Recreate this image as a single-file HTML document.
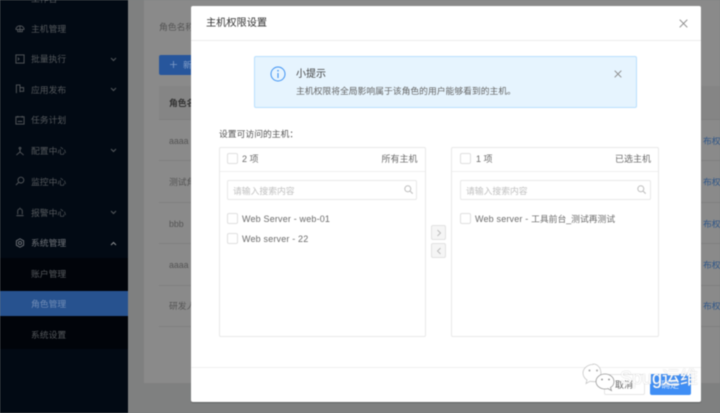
<!DOCTYPE html>
<html lang="zh">
<head>
<meta charset="utf-8">
<style>
html,body{margin:0;padding:0;width:720px;height:413px;overflow:hidden;background:#7f8080}
*{box-sizing:border-box}
#root{position:relative;width:720px;height:413px;overflow:hidden;background:#7f8080;font-family:"Liberation Sans","Noto Sans CJK SC",sans-serif;filter:blur(.5px)}
.a{position:absolute;white-space:nowrap;line-height:1}
.side{position:absolute;left:0;top:0;width:127.500px;height:413px;background:#020a14}
.sub{position:absolute;left:0;top:258px;width:127.500px;height:91px;background:#01040a}
.sel{position:absolute;left:0;top:291px;width:127.500px;height:25px;background:#27528f}
.m{position:absolute;left:31px;font-size:8.800px;line-height:12px;color:#54585c;white-space:nowrap}
.ic{position:absolute;left:15px;width:10px;height:10px;fill:none;stroke:#54585c;stroke-width:1}
.ch{position:absolute;left:110px;width:7px;height:5px;fill:none;stroke:#54585c;stroke-width:1}
.card{position:absolute;left:144px;top:0;width:576px;height:383px;background:#8a8a8a}
.t{position:absolute;font-size:8.800px;line-height:12px;color:#555;white-space:nowrap}
.ln{position:absolute;left:159px;width:561px;height:1px;background:#7f7f7f}
.blue{position:absolute;left:703px;font-size:8.800px;line-height:12px;color:#2f5688;white-space:nowrap}
.modal{position:absolute;left:190.500px;top:5.500px;width:510.500px;height:396px;background:#fff;border-radius:2px;box-shadow:0 1px 1px rgba(0,0,0,.25)}
.list{position:absolute;top:147px;height:190px;background:#fff;border:1px solid #e8e8e8;border-radius:2px}
.cb{position:absolute;width:11px;height:11px;border:1px solid #e0e0e0;border-radius:2px;background:#fff}
.lt{position:absolute;font-size:9px;line-height:12px;color:#6a6a6a;white-space:nowrap}
.inp{position:absolute;height:20px;border:1px solid #e8e8e8;border-radius:2px;background:#fff}
.ph{position:absolute;font-size:8.800px;line-height:12px;color:#c0c0c0;white-space:nowrap}
.arrow{position:absolute;left:431px;width:15px;height:15px;background:#f5f5f5;border:1px solid #e2e2e2;border-radius:2px}
</style>
</head>
<body>
<div id="root">
  <div class="side"></div>
  <div class="sub"></div>
  <div class="sel"></div>

  <div class="m" style="top:-7px">工作台</div>
  <div class="m" style="top:23px">主机管理</div>
  <div class="m" style="top:53px">批量执行</div>
  <div class="m" style="top:84px">应用发布</div>
  <div class="m" style="top:114px">任务计划</div>
  <div class="m" style="top:145px">配置中心</div>
  <div class="m" style="top:176px">监控中心</div>
  <div class="m" style="top:207px">报警中心</div>
  <div class="m" style="top:237px;color:#70747a">系统管理</div>
  <div class="m" style="top:268px">账户管理</div>
  <div class="m" style="top:298px;color:#6f8bb5">角色管理</div>
  <div class="m" style="top:329px">系统设置</div>

  <svg class="ic" style="top:24px" viewBox="0 0 11 11"><path d="M1 6a4.500 4 0 0 1 9 0H1zM3 6v2.500h5V6M5.500 2v6"/></svg>
  <svg class="ic" style="top:54px" viewBox="0 0 11 11"><rect x="1" y="1" width="9" height="9"/><path d="M3 4l1.500 1.500L3 7"/></svg>
  <svg class="ic" style="top:84px" viewBox="0 0 11 11"><path d="M1.500 10V1h4v8M5.500 4h4v4h-4"/></svg>
  <svg class="ic" style="top:115px" viewBox="0 0 11 11"><rect x="1" y="2" width="9" height="8"/><path d="M3 1v2M8 1v2M3 7h5"/></svg>
  <svg class="ic" style="top:146px" viewBox="0 0 11 11"><circle cx="5.500" cy="2.500" r="1"/><path d="M5.500 3.500V6.500L1.500 10M5.500 6.500l4 3.500"/></svg>
  <svg class="ic" style="top:176px" viewBox="0 0 11 11"><circle cx="6.500" cy="4.500" r="3.200"/><path d="M4 7l-3 3"/></svg>
  <svg class="ic" style="top:207px" viewBox="0 0 11 11"><path d="M3 8V4.500a2.500 2.500 0 0 1 5 0V8M1.500 9.500h8M5.500 .5v.8"/></svg>
  <svg class="ic" style="top:238px;stroke:#70747a" viewBox="0 0 11 11"><path d="M5.500 .8l4 2.300v4.800l-4 2.300-4-2.300V3.100z"/><circle cx="5.500" cy="5.500" r="1.700"/></svg>

  <svg class="ch" style="top:57px" viewBox="0 0 7 5"><path d="M1 1l2.500 2.500L6 1"/></svg>
  <svg class="ch" style="top:87px" viewBox="0 0 7 5"><path d="M1 1l2.500 2.500L6 1"/></svg>
  <svg class="ch" style="top:148px" viewBox="0 0 7 5"><path d="M1 1l2.500 2.500L6 1"/></svg>
  <svg class="ch" style="top:210px" viewBox="0 0 7 5"><path d="M1 1l2.500 2.500L6 1"/></svg>
  <svg class="ch" style="top:241px;stroke:#8a8d90" viewBox="0 0 7 5"><path d="M1 4l2.500-2.500L6 4"/></svg>

  <div class="card"></div>
  <div class="t" style="left:159px;top:21px">角色名称</div>
  <div class="a" style="left:159px;top:55px;width:60px;height:20px;background:#27569c;border-radius:2px"></div>
  <svg class="a" style="left:170px;top:61px;width:7px;height:7px" viewBox="0 0 7 7"><path d="M3.500 0v7M0 3.500h7" stroke="#7f9cc7" stroke-width=".8"/></svg>
  <div class="t" style="left:183px;top:59px;color:#7f9cc7">新建</div>
  <div class="a" style="left:159px;top:86px;width:561px;height:34px;background:#858585"></div>
  <div class="t" style="left:169px;top:97px;color:#333;font-weight:bold">角色名称</div>
  <div class="ln" style="top:119px"></div>
  <div class="ln" style="top:160px"></div>
  <div class="ln" style="top:202px"></div>
  <div class="ln" style="top:243px"></div>
  <div class="ln" style="top:285px"></div>
  <div class="ln" style="top:326px"></div>
  <div class="t" style="left:169px;top:135px">aaaa</div>
  <div class="t" style="left:169px;top:176px">测试角色</div>
  <div class="t" style="left:169px;top:218px">bbb</div>
  <div class="t" style="left:169px;top:259px">aaaa</div>
  <div class="t" style="left:169px;top:300px">研发人员</div>
  <div class="blue" style="top:135px">布权</div>
  <div class="blue" style="top:176px">布权</div>
  <div class="blue" style="top:218px">布权</div>
  <div class="blue" style="top:259px">布权</div>
  <div class="blue" style="top:300px">布权</div>

  <div class="modal"></div>
  <div class="a" style="left:191px;top:40px;width:510px;height:1px;background:#ececec"></div>
  <div class="a" style="left:206px;top:17px;font-size:10.200px;line-height:13px;color:#333">主机权限设置</div>
  <svg class="a" style="left:679px;top:19px;width:9px;height:9px" viewBox="0 0 9 9"><path d="M.7 .7l7.600 7.600M8.300 .7L.7 8.300" stroke="#8c8c8c" stroke-width="1" fill="none"/></svg>

  <div class="a" style="left:254px;top:56px;width:383px;height:52px;background:#e6f4fe;border:1px solid #b9e0fd;border-radius:2px"></div>
  <svg class="a" style="left:270px;top:66px;width:16px;height:16px" viewBox="0 0 16 16"><circle cx="8" cy="8" r="7" fill="none" stroke="#3f93f3" stroke-width="1"/><path d="M8 7v5" stroke="#3f93f3" stroke-width="1.100"/><circle cx="8" cy="4.700" r=".8" fill="#3f93f3"/></svg>
  <div class="a" style="left:296px;top:68px;font-size:10px;line-height:13px;color:#444">小提示</div>
  <div class="a" style="left:296px;top:85px;font-size:8.800px;line-height:12px;color:#666">主机权限将全局影响属于该角色的用户能够看到的主机。</div>
  <svg class="a" style="left:614px;top:70px;width:8px;height:8px" viewBox="0 0 8 8"><path d="M.7 .7l6.600 6.600M7.300 .7L.7 7.300" stroke="#8c8c8c" stroke-width="1" fill="none"/></svg>

  <div class="a" style="left:219px;top:128px;font-size:8.800px;line-height:12px;color:#555">设置可访问的主机：</div>

  <div class="list" style="left:219px;width:207px"></div>
  <div class="a" style="left:220px;top:171px;width:205px;height:1px;background:#f0f0f0"></div>
  <div class="cb" style="left:227px;top:153px"></div>
  <div class="lt" style="left:242px;top:153px">2 项</div>
  <div class="lt" style="left:381.500px;top:153px">所有主机</div>
  <div class="inp" style="left:227px;top:180px;width:190px"></div>
  <div class="ph" style="left:233px;top:185px">请输入搜索内容</div>
  <svg class="a" style="left:404px;top:185px;width:9px;height:9px" viewBox="0 0 9 9"><circle cx="3.800" cy="3.800" r="3" fill="none" stroke="#bdbdbd"/><path d="M6 6l2.700 2.700" stroke="#bdbdbd"/></svg>
  <div class="cb" style="left:227px;top:213px"></div>
  <div class="lt" style="left:242px;top:213px;letter-spacing:.17px">Web Server - web-01</div>
  <div class="cb" style="left:227px;top:233px"></div>
  <div class="lt" style="left:242px;top:233px;letter-spacing:.17px">Web server - 22</div>

  <div class="arrow" style="top:225px"><svg style="position:absolute;left:4px;top:3px;width:6px;height:8px" viewBox="0 0 6 8"><path d="M1.500 1l3 3-3 3" fill="none" stroke="#bdbdbd"/></svg></div>
  <div class="arrow" style="top:243px"><svg style="position:absolute;left:4px;top:3px;width:6px;height:8px" viewBox="0 0 6 8"><path d="M4.500 1l-3 3 3 3" fill="none" stroke="#bdbdbd"/></svg></div>

  <div class="list" style="left:451px;width:208px"></div>
  <div class="a" style="left:452px;top:171px;width:206px;height:1px;background:#f0f0f0"></div>
  <div class="cb" style="left:460px;top:153px"></div>
  <div class="lt" style="left:476px;top:153px">1 项</div>
  <div class="lt" style="left:615px;top:153px">已选主机</div>
  <div class="inp" style="left:460px;top:180px;width:191px"></div>
  <div class="ph" style="left:466px;top:185px">请输入搜索内容</div>
  <svg class="a" style="left:637px;top:185px;width:9px;height:9px" viewBox="0 0 9 9"><circle cx="3.800" cy="3.800" r="3" fill="none" stroke="#bdbdbd"/><path d="M6 6l2.700 2.700" stroke="#bdbdbd"/></svg>
  <div class="cb" style="left:460px;top:213px"></div>
  <div class="lt" style="left:475px;top:213px"><span style="letter-spacing:.17px">Web server - </span><span style="font-size:8.800px">工具前台_测试再测试</span></div>

  <div class="a" style="left:191px;top:367px;width:510px;height:1px;background:#efefef"></div>
  <div class="a" style="left:604px;top:374px;width:41px;height:21px;background:#fff;border:1px solid #e6e6e6;border-radius:2px"></div>
  <div class="a" style="left:615px;top:379px;font-size:9px;line-height:12px;color:#666">取消</div>
  <div class="a" style="left:650px;top:374px;width:41px;height:21px;background:#3f8ef5;border-radius:2px"></div>
  <div class="a" style="left:661px;top:379px;font-size:9px;line-height:12px;color:#cfe2fb">确定</div>

  <svg class="a" style="left:582px;top:362px;width:36px;height:32px" viewBox="0 0 36 32">
    <path d="M11 2.500C5.500 2.500 1 6.500 1 11c0 3 1.500 5.300 4 7l-1 3.500 4-2.200c1 .3 2.500 .4 4 .4h3l4-8c0-6-3.500-9.700-8-9.700z" fill="#fff" stroke="#c8c8c8" stroke-width=".8"/>
    <circle cx="7.500" cy="8.500" r="1" fill="#aaa"/><circle cx="15" cy="8.500" r="1" fill="#aaa"/>
    <path d="M23 12c-5 0-9 3.300-9 7.500S18 27 23 27c1 0 2-.1 3-.4l3.500 2-1-3c2-1.300 3.500-3.400 3.500-6 0-4.200-4-7.600-9-7.600z" fill="#fff" stroke="#999" stroke-width=".8"/>
    <circle cx="20" cy="17.500" r=".9" fill="#888"/><circle cx="27" cy="17.500" r=".9" fill="#888"/>
  </svg>
  <div class="a" style="left:620px;top:368px;font-size:18px;line-height:20px;color:#fff;text-shadow:0 0 1px #aaa">Spug运维</div>
</div>
</body>
</html>
